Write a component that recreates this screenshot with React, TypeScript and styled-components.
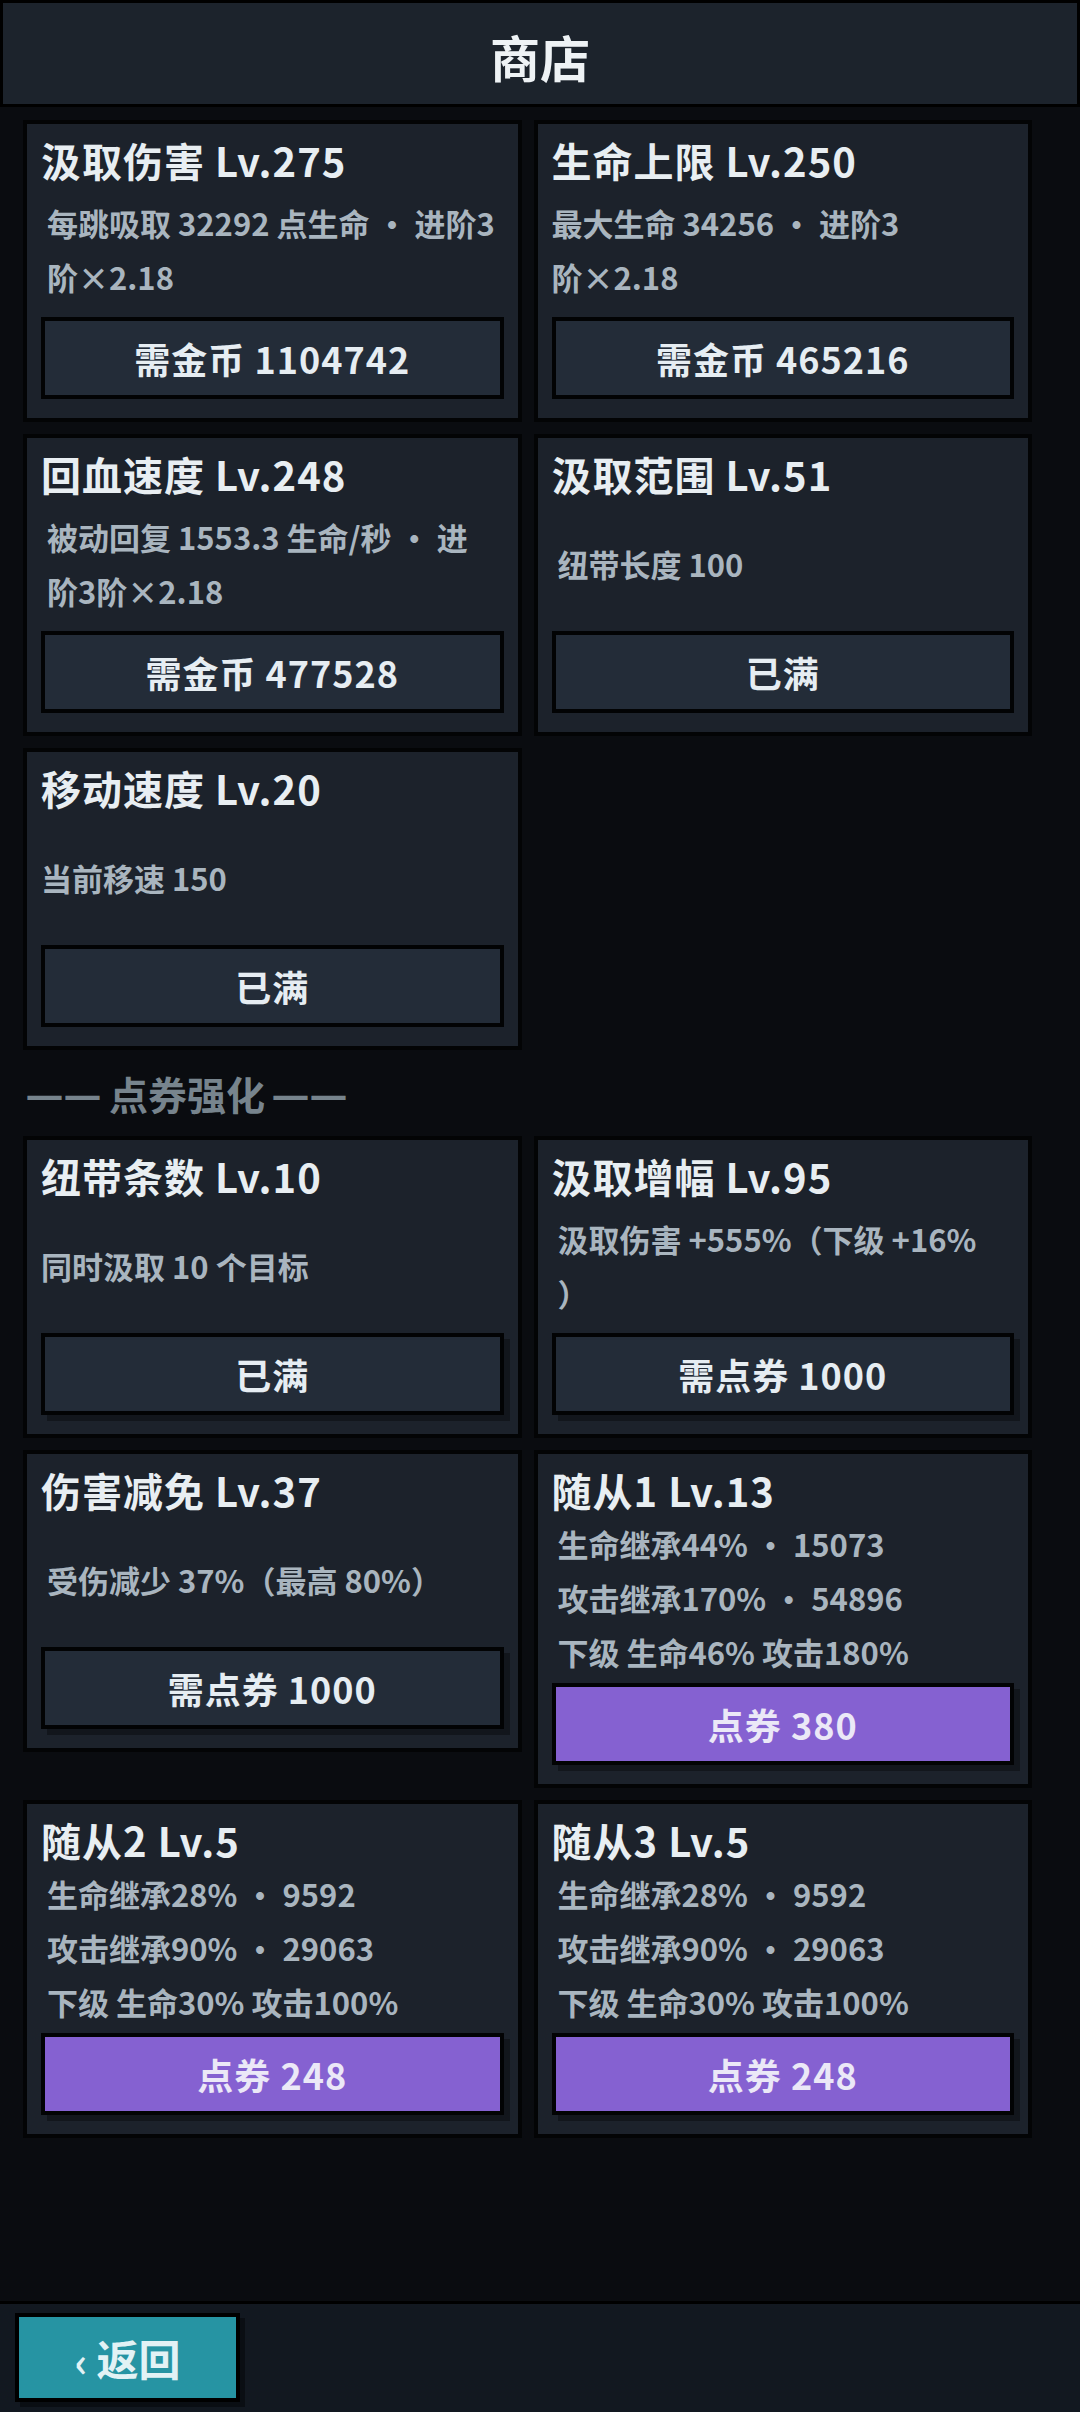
import React from "react";
import styled, { createGlobalStyle } from "styled-components";

const GlobalStyle = createGlobalStyle`
  * { box-sizing: border-box; }
  html, body {
    margin: 0;
    padding: 0;
    background: #0a0c10;
  }
  body {
    font-family: "Noto Sans CJK SC", "Noto Sans", sans-serif;
    -webkit-font-smoothing: antialiased;
  }
`;

type Upgrade = {
  name: string;
  lines: string[];
  cost: string;
  purple?: boolean;
  flush?: boolean;
  raised?: boolean;
};

const goldUpgrades: Upgrade[] = [
  { name: "汲取伤害 Lv.275", lines: ["每跳吸取 32292 点生命 ・ 进阶3", "阶×2.18"], cost: "需金币 1104742" },
  { name: "生命上限 Lv.250", lines: ["最大生命 34256 ・ 进阶3", "阶×2.18"], cost: "需金币 465216", flush: true },
  { name: "回血速度 Lv.248", lines: ["被动回复 1553.3 生命/秒 ・ 进", "阶3阶×2.18"], cost: "需金币 477528" },
  { name: "汲取范围 Lv.51", lines: ["纽带长度 100"], cost: "已满" },
  { name: "移动速度 Lv.20", lines: ["当前移速 150"], cost: "已满", flush: true },
];

const couponUpgrades: Upgrade[] = [
  { name: "纽带条数 Lv.10", lines: ["同时汲取 10 个目标"], cost: "已满", flush: true, raised: true },
  { name: "汲取增幅 Lv.95", lines: ["汲取伤害 +555%（下级 +16%", "）"], cost: "需点券 1000", raised: true },
  { name: "伤害减免 Lv.37", lines: ["受伤减少 37%（最高 80%）"], cost: "需点券 1000", raised: true },
  {
    name: "随从1 Lv.13",
    lines: ["生命继承44% ・ 15073", "攻击继承170% ・ 54896", "下级 生命46% 攻击180%"],
    cost: "点券 380",
    purple: true,
    raised: true,
  },
  {
    name: "随从2 Lv.5",
    lines: ["生命继承28% ・ 9592", "攻击继承90% ・ 29063", "下级 生命30% 攻击100%"],
    cost: "点券 248",
    purple: true,
    raised: true,
  },
  {
    name: "随从3 Lv.5",
    lines: ["生命继承28% ・ 9592", "攻击继承90% ・ 29063", "下级 生命30% 攻击100%"],
    cost: "点券 248",
    purple: true,
    raised: true,
  },
];

const UpgradeCard = ({ item }: { item: Upgrade }) => (
  <Card>
    <CardTitle>{item.name}</CardTitle>
    <Desc $flush={item.flush}>
      {item.lines.map((line, i) => (
        <DescLine key={i}>{line}</DescLine>
      ))}
    </Desc>
    <BuyButton $purple={item.purple} $raised={item.raised}>
      {item.cost}
    </BuyButton>
  </Card>
);

export default function App() {
  return (
    <>
      <GlobalStyle />
      <Screen>
        <Header>商店</Header>
        <Main>
          <Grid>
            {goldUpgrades.map((u) => (
              <UpgradeCard key={u.name} item={u} />
            ))}
          </Grid>
          <SectionTitle>
            <Dashes>——</Dashes>
            <span>点券强化</span>
            <Dashes>——</Dashes>
          </SectionTitle>
          <Grid>
            {couponUpgrades.map((u) => (
              <UpgradeCard key={u.name} item={u} />
            ))}
          </Grid>
        </Main>
        <Footer>
          <BackButton>
            <Chevron>‹</Chevron>返回
          </BackButton>
        </Footer>
      </Screen>
    </>
  );
}

const Screen = styled.div`
  width: 1080px;
  height: 100vh;
  display: flex;
  flex-direction: column;
  background: #0a0c10;
  overflow: hidden;
`;

const Header = styled.div`
  height: 107px;
  flex-shrink: 0;
  display: flex;
  align-items: center;
  justify-content: center;
  padding-top: 4px;
  background: #1c232c;
  border: 3px solid #000;
  color: #eef2f5;
  font-size: 50px;
  font-weight: 700;
  line-height: 1;
`;

const Main = styled.div`
  flex: 1;
  display: flex;
  flex-direction: column;
  gap: 12px;
  padding: 13px 48px 0 23px;
`;

const Grid = styled.div`
  display: grid;
  grid-template-columns: 1fr 1fr;
  gap: 12px;
  align-items: start;
`;

const Card = styled.div`
  min-height: 302px;
  display: flex;
  flex-direction: column;
  justify-content: space-between;
  gap: 4px;
  padding: 13px 14px 19px;
  background: #1c222b;
  border: 4px solid #030405;
`;

const CardTitle = styled.div`
  color: #e8eef2;
  font-size: 40px;
  font-weight: 700;
  line-height: 46px;
  letter-spacing: 1px;
  white-space: nowrap;
`;

const Desc = styled.div<{ $flush?: boolean }>`
  min-height: 108px;
  display: flex;
  flex-direction: column;
  justify-content: center;
  padding-left: ${(p) => (p.$flush ? "0" : "6px")};
  color: #a9b5bf;
  font-size: 31px;
  font-weight: 700;
  line-height: 54px;
`;

const DescLine = styled.div`
  white-space: nowrap;
`;

const BuyButton = styled.div<{ $purple?: boolean; $raised?: boolean }>`
  height: 82px;
  display: flex;
  align-items: center;
  justify-content: center;
  background: ${(p) => (p.$purple ? "#8561d1" : "#232c38")};
  border: 4px solid #020304;
  box-shadow: ${(p) => (p.$raised ? "6px 6px 0 rgba(0, 0, 0, 0.35)" : "none")};
  color: ${(p) => (p.$purple ? "#ebe8f7" : "#e6edf2")};
  font-size: 36px;
  font-weight: 700;
  letter-spacing: 1px;
`;

const SectionTitle = styled.div`
  height: 62px;
  display: flex;
  align-items: center;
  gap: 7px;
  padding-left: 3px;
  color: #77848d;
  font-size: 39px;
  font-weight: 700;
  white-space: nowrap;
`;

const Dashes = styled.span`
  font-family: "Noto Sans", sans-serif;
  font-size: 37px;
  letter-spacing: 1px;
`;

const Footer = styled.div`
  height: 111px;
  flex-shrink: 0;
  padding: 9px 15px 0;
  background: #121820;
  border-top: 3px solid #000;
`;

const BackButton = styled.div`
  width: 225px;
  height: 89px;
  display: flex;
  align-items: center;
  justify-content: center;
  gap: 9px;
  background: #2694a3;
  border: 4px solid #000;
  box-shadow: 5px 5px 0 rgba(0, 0, 0, 0.4);
  color: #e2f2f5;
  font-size: 42px;
  font-weight: 700;
`;

const Chevron = styled.span`
  font-size: 40px;
  line-height: 1;
  margin-top: 4px;
`;
